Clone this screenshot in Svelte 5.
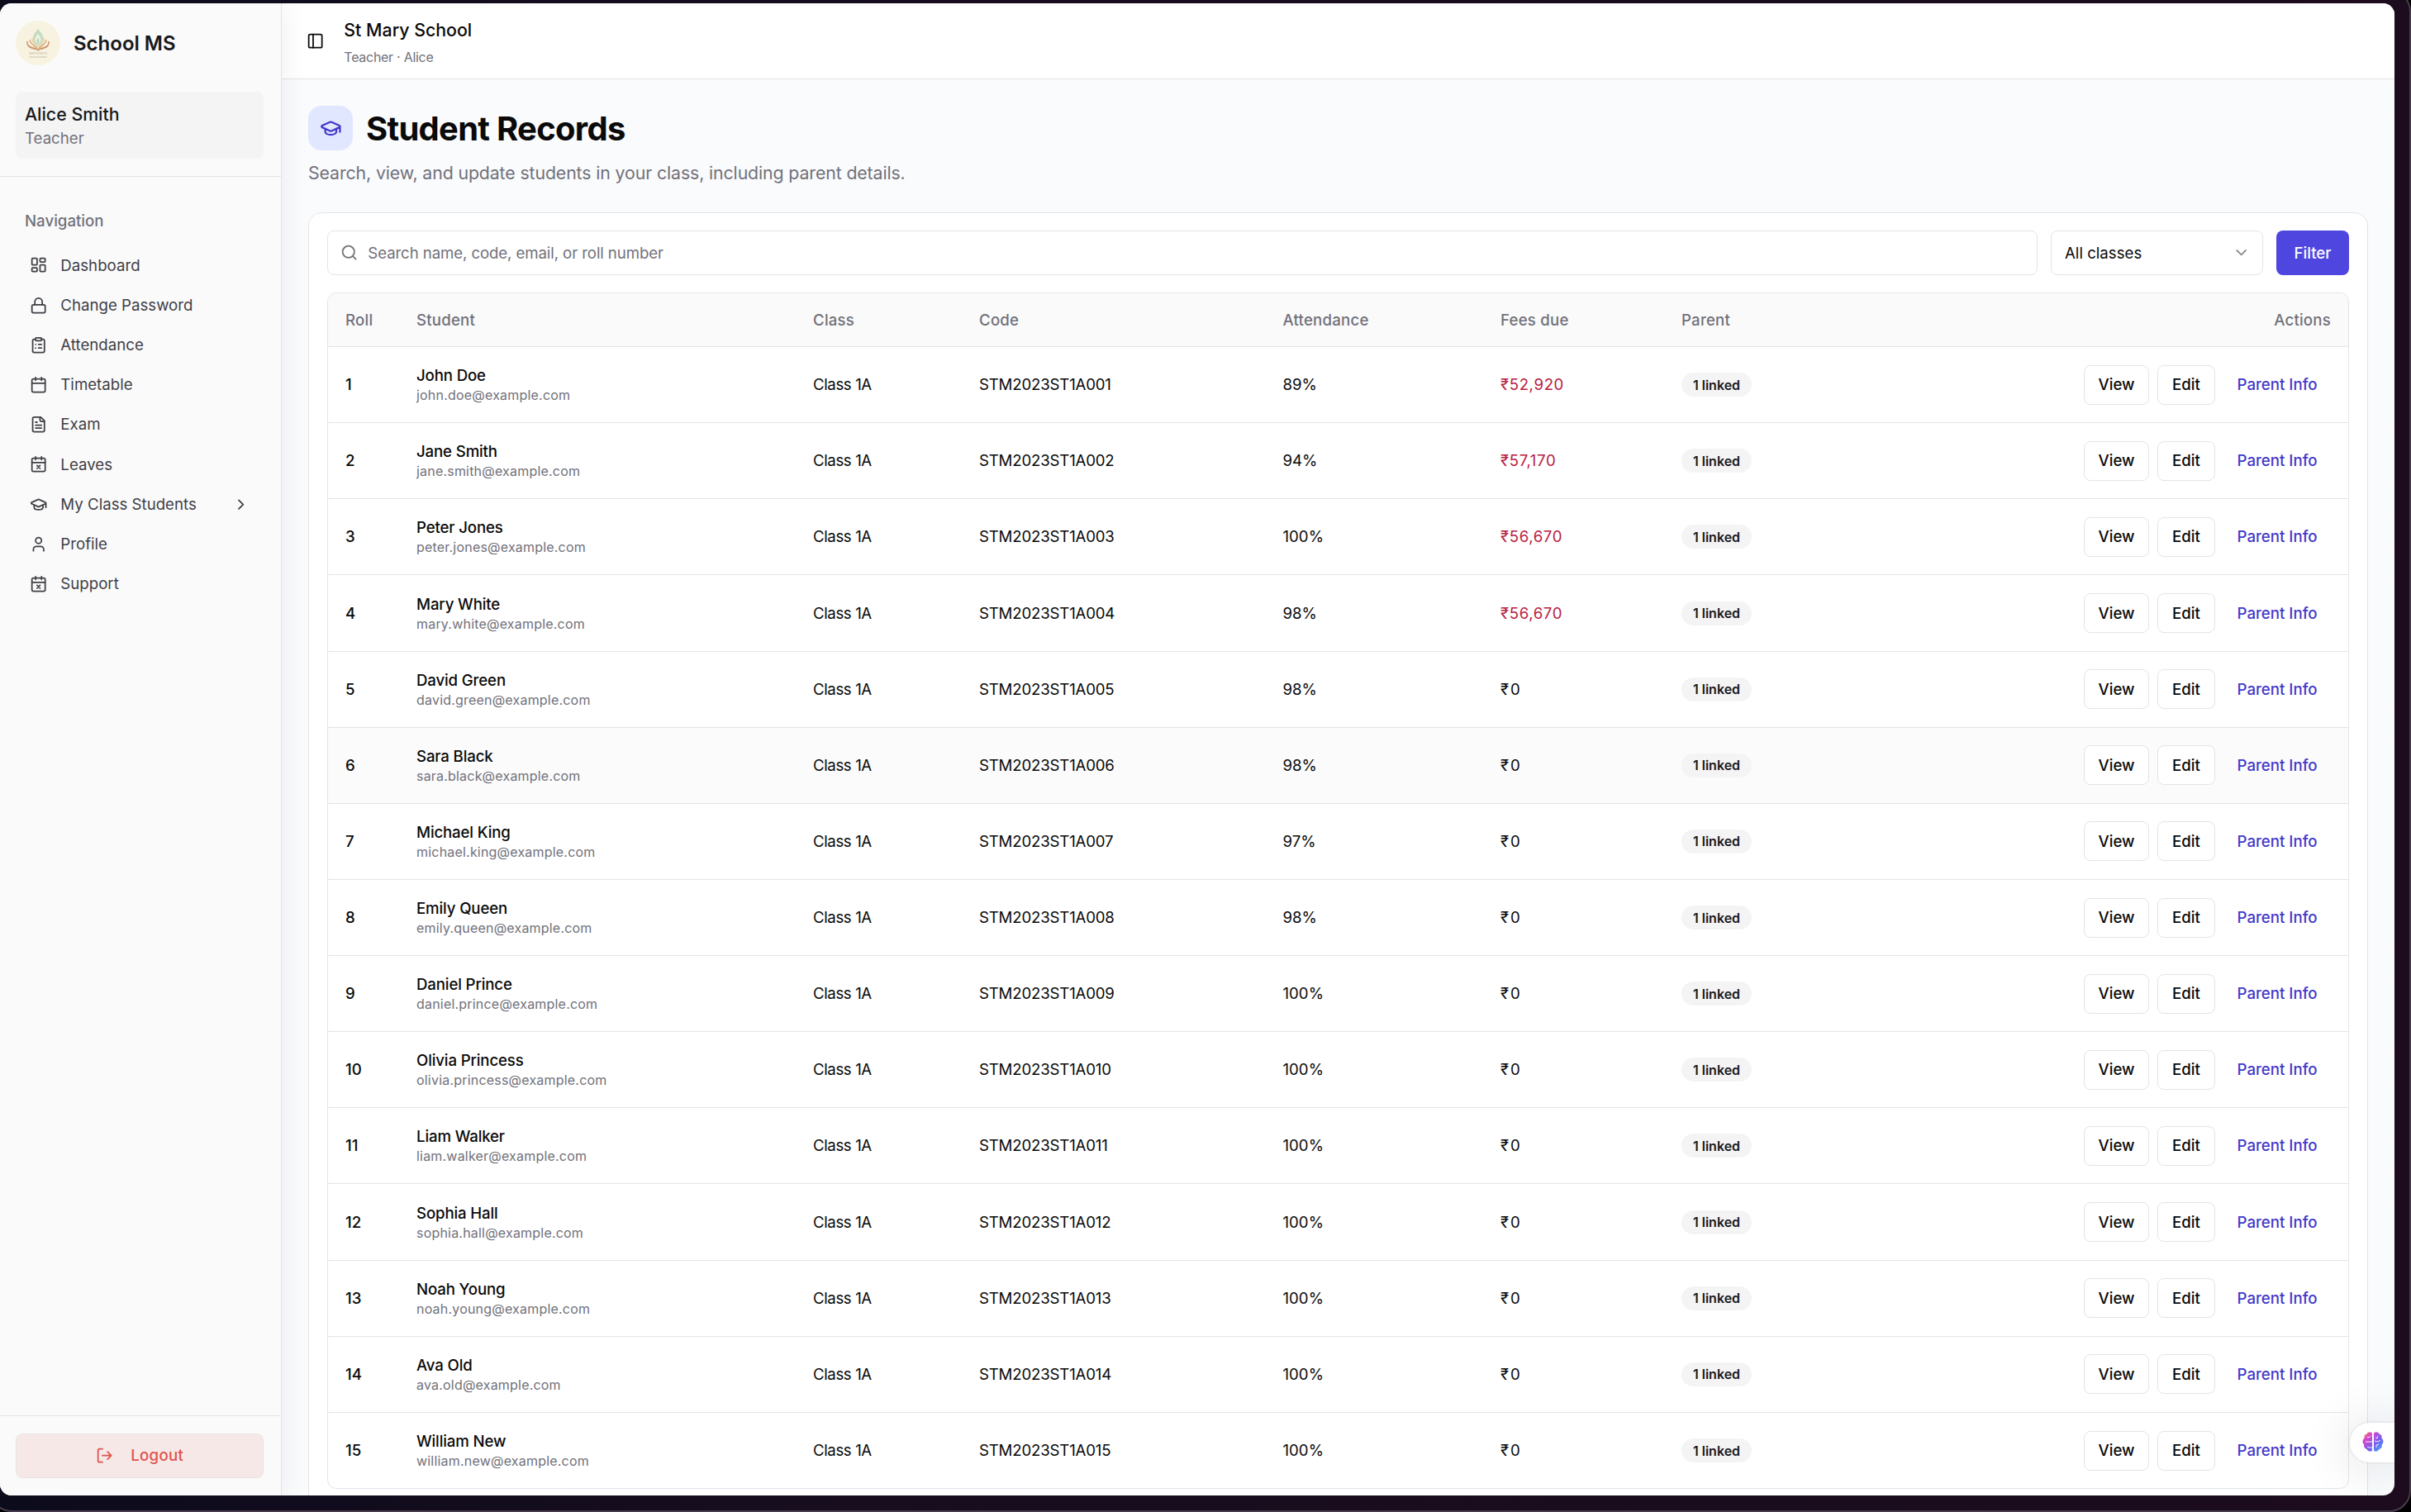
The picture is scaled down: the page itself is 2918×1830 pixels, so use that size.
<script>
  const nav = [
    { label: "Dashboard", icon: "dashboard" },
    { label: "Change Password", icon: "lock" },
    { label: "Attendance", icon: "clipboard" },
    { label: "Timetable", icon: "calendar" },
    { label: "Exam", icon: "file" },
    { label: "Leaves", icon: "calendarX" },
    { label: "My Class Students", icon: "cap", children: true },
    { label: "Profile", icon: "user" },
    { label: "Support", icon: "calendarX" },
  ];

  const columns = ["Roll", "Student", "Class", "Code", "Attendance", "Fees due", "Parent", "Actions"];

  const students = [
    { name: "John Doe", attendance: 89, due: "52,920" },
    { name: "Jane Smith", attendance: 94, due: "57,170" },
    { name: "Peter Jones", attendance: 100, due: "56,670" },
    { name: "Mary White", attendance: 98, due: "56,670" },
    { name: "David Green", attendance: 98, due: "0" },
    { name: "Sara Black", attendance: 98, due: "0" },
    { name: "Michael King", attendance: 97, due: "0" },
    { name: "Emily Queen", attendance: 98, due: "0" },
    { name: "Daniel Prince", attendance: 100, due: "0" },
    { name: "Olivia Princess", attendance: 100, due: "0" },
    { name: "Liam Walker", attendance: 100, due: "0" },
    { name: "Sophia Hall", attendance: 100, due: "0" },
    { name: "Noah Young", attendance: 100, due: "0" },
    { name: "Ava Old", attendance: 100, due: "0" },
    { name: "William New", attendance: 100, due: "0" },
  ];

  const active = 5;

  const email = (name) => name.toLowerCase().replace(" ", ".") + "@example.com";
  const code = (i) => "STM2023ST1A" + String(i + 1).padStart(3, "0");
</script>

{#snippet icon(name)}
  <svg class="icon" viewBox="0 0 24 24">
    {#if name === "dashboard"}
      <rect x="3" y="3" width="7" height="9" rx="1" />
      <rect x="14" y="3" width="7" height="5" rx="1" />
      <rect x="14" y="12" width="7" height="9" rx="1" />
      <rect x="3" y="16" width="7" height="5" rx="1" />
    {:else if name === "lock"}
      <rect x="3" y="11" width="18" height="11" rx="2" />
      <path d="M7 11V7a5 5 0 0 1 10 0v4" />
    {:else if name === "clipboard"}
      <rect x="8" y="2" width="8" height="4" rx="1" />
      <path d="M16 4h2a2 2 0 0 1 2 2v14a2 2 0 0 1-2 2H6a2 2 0 0 1-2-2V6a2 2 0 0 1 2-2h2M12 11h4M12 16h4M8 11h.01M8 16h.01" />
    {:else if name === "calendar"}
      <path d="M8 2v4M16 2v4M3 10h18" />
      <rect x="3" y="4" width="18" height="18" rx="2" />
    {:else if name === "file"}
      <path d="M15 2H6a2 2 0 0 0-2 2v16a2 2 0 0 0 2 2h12a2 2 0 0 0 2-2V7Z" />
      <path d="M14 2v4a2 2 0 0 0 2 2h4M10 9H8M16 13H8M16 17H8" />
    {:else if name === "calendarX"}
      <path d="M8 2v4M16 2v4M3 10h18M14 14l-4 4M10 14l4 4" />
      <rect x="3" y="4" width="18" height="18" rx="2" />
    {:else if name === "cap"}
      <path d="M21.42 10.922a1 1 0 0 0-.019-1.838L12.83 5.18a2 2 0 0 0-1.66 0L2.6 9.08a1 1 0 0 0 0 1.832l8.57 3.908a2 2 0 0 0 1.66 0zM22 10v6" />
      <path d="M6 12.5V16a6 3 0 0 0 12 0v-3.5" />
    {:else if name === "user"}
      <path d="M19 21v-2a4 4 0 0 0-4-4H9a4 4 0 0 0-4 4v2" />
      <circle cx="12" cy="7" r="4" />
    {:else if name === "chevronRight"}
      <path d="m9 18 6-6-6-6" />
    {:else if name === "chevronDown"}
      <path d="m6 9 6 6 6-6" />
    {:else if name === "panel"}
      <rect x="3" y="3" width="18" height="18" rx="2" />
      <path d="M9 3v18" />
    {:else if name === "search"}
      <circle cx="11" cy="11" r="8" />
      <path d="m21 21-4.3-4.3" />
    {:else if name === "logout"}
      <path d="M9 21H5a2 2 0 0 1-2-2V5a2 2 0 0 1 2-2h4M16 17l5-5-5-5M21 12H9" />
    {/if}
  </svg>
{/snippet}

<div class="desktop">
  <div class="frame"></div>
  <div class="window">
    <aside>
      <div class="top">
        <div class="brand">
          <svg class="logo" viewBox="0 0 54 54">
            <circle cx="27" cy="27" r="27" fill="#f7f3e0" />
            <path d="M27 10c5 6 7 9 6 13-1 3-3 6-6 9-3-3-5-6-6-9-1-4 1-7 6-13Z" fill="#c5dcc5" />
            <path d="M27 16c3 4 4 6 3 9l-3 5-3-5c-1-3 0-5 3-9Z" fill="#f3f2df" />
            <path d="M27 21c2 2 2 5 0 8-2-3-2-6 0-8Z" fill="#b5d6bd" />
            <path
              d="M14 25c0 5 4 7 8 8 3 1 4 1 5 3 1-2 2-2 5-3 4-1 8-3 8-8 1 6-3 8-7 9-3 .6-5 .8-6 2.500-1-1.700-3-1.900-6-2.500-4-1-8-3-7-9Z"
              fill="#c98f6b"
              stroke="#c98f6b"
              stroke-width="0.8"
            />
            <path d="M17 23c0 5 6 7 10 12 4-5 10-7 10-12" fill="none" stroke="#dfa678" stroke-width="1.4" />
            <path d="M20 21c-1 5 4 8 7 13 3-5 8-8 7-13" fill="none" stroke="#e8cd98" stroke-width="1.2" />
            <text x="27" y="41" font-size="3.8" textLength="22">SMITHVIDYA</text>
            <text x="27" y="44.6" font-size="2.2" textLength="22">SCHOOL MANAGEMENT</text>
          </svg>
          <span>School MS</span>
        </div>
        <div class="account">
          <strong>Alice Smith</strong>
          <span>Teacher</span>
        </div>
      </div>

      <nav>
        <h2>Navigation</h2>
        {#each nav as item}
          <a href="#{item.icon}">
            {@render icon(item.icon)}
            <span>{item.label}</span>
            {#if item.children}
              {@render icon("chevronRight")}
            {/if}
          </a>
        {/each}
      </nav>

      <footer>
        <button class="logout">{@render icon("logout")} Logout</button>
      </footer>
    </aside>

    <div class="page">
      <header>
        {@render icon("panel")}
        <div>
          <strong>St Mary School</strong>
          <span>Teacher · Alice</span>
        </div>
      </header>

      <main>
        <div class="title">
          <div class="tile">{@render icon("cap")}</div>
          <h1>Student Records</h1>
        </div>
        <p class="lead">Search, view, and update students in your class, including parent details.</p>

        <section class="card">
          <div class="filters">
            <div class="search">
              {@render icon("search")}
              <span>Search name, code, email, or roll number</span>
            </div>
            <div class="select">
              <span>All classes</span>
              {@render icon("chevronDown")}
            </div>
            <button class="filter">Filter</button>
          </div>

          <div class="table">
            <div class="row head">
              {#each columns as column}
                <div>{column}</div>
              {/each}
            </div>
            {#each students as student, i}
              <div class="row" class:active={i === active}>
                <div class="roll">{i + 1}</div>
                <div class="student">
                  <strong>{student.name}</strong>
                  <span>{email(student.name)}</span>
                </div>
                <div class="class">Class 1A</div>
                <div class="code">{code(i)}</div>
                <div>{student.attendance}%</div>
                <div class="fees" class:due={student.due !== "0"}>₹{student.due}</div>
                <div><span class="badge">1 linked</span></div>
                <div class="actions">
                  <button class="view">View</button>
                  <button class="edit">Edit</button>
                  <button class="link">Parent Info</button>
                </div>
              </div>
            {/each}
          </div>
        </section>
      </main>
    </div>

    <div class="assistant">
      <svg viewBox="0 0 26 24">
        <defs>
          <linearGradient id="brain" x1="0" y1="0" x2="1" y2="1">
            <stop offset="0" stop-color="#f7a23b" />
            <stop offset="0.25" stop-color="#d946c8" />
            <stop offset="0.6" stop-color="#7a5cf0" />
            <stop offset="1" stop-color="#3bb2fb" />
          </linearGradient>
        </defs>
        <path
          d="M12 1.5C10-.5 6.500 0 5.500 2.500 3 3 1.800 5.500 2.800 7.500 0 9-.3 13.500 2.300 15.500 1.500 18 3 20.500 5.500 21 7 24 11 24.500 12 22.500ZM14 1.500C16-.5 19.500 0 20.500 2.500 23 3 24.200 5.500 23.200 7.500 26 9 26.300 13.500 23.700 15.500 24.500 18 23 20.500 20.500 21 19 24 15 24.500 14 22.500Z"
          fill="url(#brain)"
        />
        <path
          d="M6 6.500h3l2-2M4 12h8M6 18l2 1h4M16 7l2 1 1-3M15 11l4 1 3-2M17 19v-3l3-1"
          fill="none"
          stroke="#fff"
          stroke-width="0.9"
        />
      </svg>
    </div>
  </div>
</div>

<style>
  :global(body) {
    background: #000;
  }

  .desktop {
    position: relative;
    width: 2918px;
    height: 1830px;
    overflow: hidden;
    font-family: Inter, "Noto Sans", sans-serif;
    font-size: 18.67px;
    color: #0a0a0a;
    box-sizing: border-box;
    padding-top: 4px;
  }

  .desktop :global(*) {
    box-sizing: border-box;
  }

  .frame {
    position: absolute;
    inset: -12px 0 0 -12px;
    border: 2px solid #473c4b;
    border-radius: 26px;
    background: linear-gradient(90deg, #0c0b1c, #160d1e 30%, #1c0c1d);
  }

  .window {
    position: relative;
    display: flex;
    width: 2898px;
    height: 1806px;
    border-radius: 14px;
    overflow: hidden;
    background: #fafbfd;
  }

  .icon {
    width: 21.33px;
    height: 21.33px;
    flex: none;
    fill: none;
    stroke: currentColor;
    stroke-width: 2;
    stroke-linecap: round;
    stroke-linejoin: round;
  }

  button {
    font: inherit;
    font-weight: 500;
    padding: 0;
    border: 1px solid #e4e4e7;
    border-radius: 8px;
    background: #fff;
    color: inherit;
  }

  strong,
  h1,
  h2,
  p {
    margin: 0;
    font-weight: 500;
  }

  aside {
    position: relative;
    z-index: 1;
    display: flex;
    flex-direction: column;
    width: 341px;
    flex: none;
    background: #fafafa;
    border-right: 1px solid #e4e4e7;
    box-shadow: 0 0 34px rgba(15, 23, 42, 0.07);
  }

  .top {
    height: 210px;
    padding: 21px 21px 0 19px;
    border-bottom: 1px solid #e4e4e7;
  }

  .brand {
    display: flex;
    align-items: center;
    gap: 16px;
    font-size: 24px;
    font-weight: 600;
    color: #18181b;
  }

  .logo {
    width: 54px;
    height: 54px;
  }

  .logo text {
    fill: #c4b5a0;
    font-weight: 400;
    text-anchor: middle;
  }

  .account {
    display: flex;
    flex-direction: column;
    justify-content: center;
    height: 81px;
    margin-top: 32px;
    padding: 3px 0 0 11px;
    border-radius: 8px;
    background: #f4f4f5;
  }

  .account strong {
    font-size: 21.33px;
    line-height: 29px;
    color: #18181b;
  }

  .account span {
    line-height: 29px;
    color: #71717a;
  }

  nav {
    flex: 1;
    padding: 32px 21px 0 19px;
    color: #3f3f46;
  }

  h2 {
    height: 43px;
    margin-bottom: 8px;
    padding-left: 11px;
    font-size: 18.67px;
    line-height: 43px;
    color: #71717a;
  }

  nav a {
    display: flex;
    align-items: center;
    height: 48.2px;
    padding: 0 17px;
    gap: 16px;
    color: inherit;
    text-decoration: none;
  }

  nav a span {
    flex: 1;
  }

  footer {
    height: 97px;
    padding: 21px 21px 0 19px;
    border-top: 1px solid #e4e4e7;
  }

  .logout {
    display: flex;
    align-items: center;
    justify-content: center;
    gap: 21px;
    width: 300px;
    height: 54px;
    padding-bottom: 1px;
    letter-spacing: 0.25px;
    color: #e0524d;
    background: #f7e8e8;
  }

  .page {
    flex: 1;
    display: flex;
    flex-direction: column;
    min-width: 0;
  }

  header {
    display: flex;
    align-items: center;
    gap: 24px;
    flex: none;
    height: 92px;
    padding-left: 30px;
    background: #fff;
    border-bottom: 1px solid #e4e4e7;
  }

  header div {
    display: flex;
    flex-direction: column;
    padding-top: 3px;
  }

  header strong {
    font-size: 21.33px;
    line-height: 35px;
  }

  header span {
    font-size: 16px;
    line-height: 30px;
    letter-spacing: -0.28px;
    color: #71717a;
  }

  main {
    padding: 32px 32px 0;
  }

  .title {
    display: flex;
    align-items: center;
    gap: 16px;
  }

  .tile {
    display: grid;
    place-items: center;
    width: 54px;
    height: 54px;
    border-radius: 16px;
    background: #e0e7ff;
    color: #4338ca;
  }

  .tile .icon {
    width: 26.67px;
    height: 26.67px;
  }

  h1 {
    font-size: 40px;
    font-weight: 700;
    letter-spacing: -0.72px;
  }

  .lead {
    margin-top: 11px;
    font-size: 21.33px;
    font-weight: 400;
    line-height: 32px;
    letter-spacing: -0.13px;
    color: #71717a;
  }

  .card {
    height: 1600px;
    margin-top: 32px;
    padding: 21px 22px;
    border: 1px solid #e4e4e7;
    border-radius: 16px;
    background: #fff;
  }

  .filters {
    display: flex;
    gap: 16px;
    height: 54px;
    margin-bottom: 21px;
  }

  .search,
  .select {
    display: flex;
    align-items: center;
    border: 1px solid #e4e4e7;
    border-radius: 8px;
  }

  .search {
    flex: 1;
    gap: 12px;
    padding-left: 15px;
    letter-spacing: -0.11px;
    color: #71717a;
  }

  .select {
    justify-content: space-between;
    width: 257px;
    padding: 0 15px 0 16px;
  }

  .select .icon {
    color: #8b8b8f;
  }

  .filter {
    width: 88px;
    border: 0;
    background: #4f46e0;
    color: #fff;
  }

  .table {
    border: 1px solid #e4e4e7;
    border-radius: 11px;
    overflow: hidden;
  }

  .row {
    display: grid;
    grid-template-columns: 86px 480px 201px 367.5px 263.5px 219px 1fr auto;
    align-items: center;
    height: 92.14px;
    border-bottom: 1px solid #e4e4e7;
    padding: 0.3px 21px 0;
  }

  .row:last-child {
    height: 91.5px;
    border-bottom: 0;
  }

  .row.head {
    height: 65px;
    padding-top: 0;
    background: #fafafa;
    color: #71717a;
    font-weight: 500;
    letter-spacing: 0.2px;
  }

  .active {
    background: #fbfbfb;
  }

  .roll {
    font-weight: 500;
  }

  .student {
    display: flex;
    flex-direction: column;
    padding-top: 1px;
  }

  .student strong {
    line-height: 25px;
    letter-spacing: -0.15px;
  }

  .student span {
    font-size: 16px;
    line-height: 23px;
    letter-spacing: 0.2px;
    color: #71717a;
  }

  .class {
    letter-spacing: -0.4px;
  }

  .code {
    letter-spacing: -0.2px;
  }

  .fees {
    letter-spacing: 2px;
  }

  .due {
    letter-spacing: 0.6px;
    color: #b9203f;
  }

  .badge {
    display: inline-flex;
    align-items: center;
    justify-content: center;
    width: 85px;
    height: 29px;
    border-radius: 15px;
    background: #f4f4f5;
    color: #18181b;
    font-size: 16px;
    font-weight: 600;
  }

  .actions {
    display: flex;
    gap: 10px;
  }

  .actions button {
    height: 48px;
    border-radius: 8px;
  }

  .view {
    width: 79px;
  }

  .edit {
    width: 70px;
  }

  .actions .link {
    width: 130px;
    border: 0;
    background: none;
    color: #4338ca;
  }

  .assistant {
    position: absolute;
    z-index: 2;
    right: 0;
    bottom: 40px;
    width: 54px;
    height: 48px;
    padding: 11px 0 0 15px;
    border-radius: 24px 0 0 24px;
    background: #fff;
    box-shadow: 0 4px 60px rgba(15, 23, 42, 0.16), 0 0 3px rgba(0, 0, 0, 0.15);
  }

  .assistant svg {
    display: block;
    width: 26px;
    height: 24px;
  }
</style>
